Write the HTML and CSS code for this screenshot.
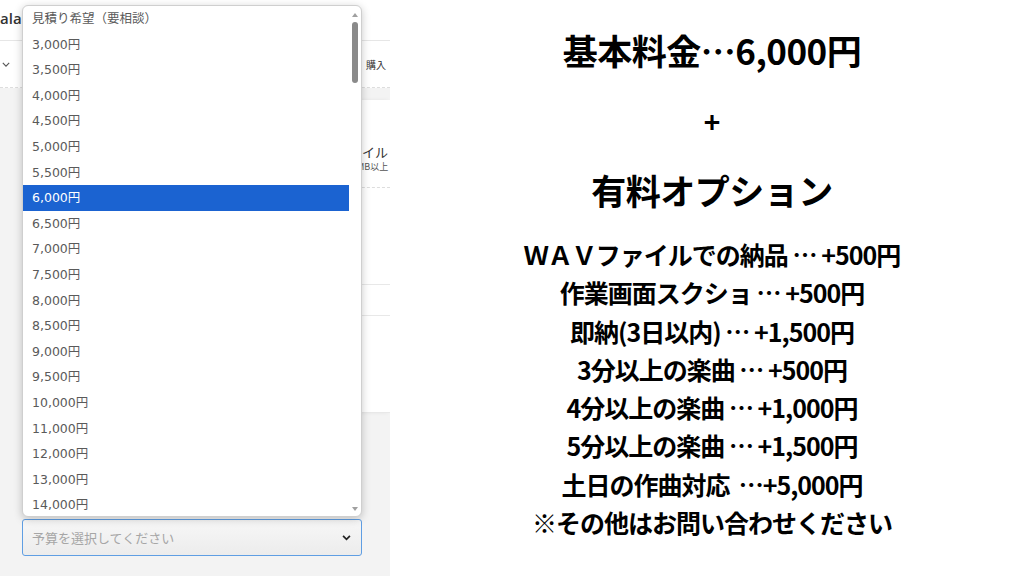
FILE: index.html
```html
<!doctype html>
<html lang="ja">
    <head>
        <meta charset="UTF-8" />
        <meta name="viewport" content="width=device-width, initial-scale=1.0" />
        <title>料金表 | 作曲依頼</title>
        <link rel="stylesheet" href="styles.css">
    </head>
    <body>
        <section class="shot">
            <header class="top-bar">
                <span class="logo">ala</span>
            </header>
            <div class="nav-bar">
                <span class="nav-chevron">
                    <svg viewBox="0 0 10 6" width="8" height="5"><path d="M1 1l4 4 4-4" fill="none" stroke="#555" stroke-width="1.4"/></svg>
                </span>
                <span class="nav-buy">購入</span>
            </div>
            <div class="card">
                <div class="card-row dashed">
                    <span class="card-title">ファイル</span>
                    <span class="card-sub">100MB以上</span>
                </div>
                <div class="card-row"></div>
                <div class="card-row short"></div>
                <div class="card-row"></div>
            </div>

            <div class="budget">
                <div class="fake-select">
                    <span class="placeholder">予算を選択してください</span>
                    <svg viewBox="0 0 10 7" width="9" height="6"><path d="M1 1l4 4 4-4" fill="none" stroke="#222" stroke-width="2"/></svg>
                </div>
            </div>

            <!-- open dropdown list -->
            <div class="popup">
                <ul class="options">
                    <li>見積り希望（要相談）</li>
                    <li>3,000円</li>
                    <li>3,500円</li>
                    <li>4,000円</li>
                    <li>4,500円</li>
                    <li>5,000円</li>
                    <li>5,500円</li>
                    <li class="selected">6,000円</li>
                    <li>6,500円</li>
                    <li>7,000円</li>
                    <li>7,500円</li>
                    <li>8,000円</li>
                    <li>8,500円</li>
                    <li>9,000円</li>
                    <li>9,500円</li>
                    <li>10,000円</li>
                    <li>11,000円</li>
                    <li>12,000円</li>
                    <li>13,000円</li>
                    <li>14,000円</li>
                </ul>
                <div class="scroll">
                    <span class="arrow up"></span>
                    <span class="thumb"></span>
                    <span class="arrow down"></span>
                </div>
            </div>
        </section>

        <section class="price">
            <h1 class="big">基本料金…6,000円</h1>
            <div class="plus">+</div>
            <h2 class="big">有料オプション</h2>
            <ul class="opts">
                <li>ＷＡＶファイルでの納品 … +500円</li>
                <li>作業画面スクショ … +500円</li>
                <li>即納(3日以内) … +1,500円</li>
                <li>3分以上の楽曲 … +500円</li>
                <li>4分以上の楽曲 … +1,000円</li>
                <li>5分以上の楽曲 … +1,500円</li>
                <li>土日の作曲対応 &nbsp;…+5,000円</li>
                <li>※その他はお問い合わせください</li>
            </ul>
        </section>
    </body>
</html>
```

FILE: styles.css
```css
body,
html {
    margin: 0;
    padding: 0;
}
body {
    display: flex;
    width: 1024px;
    height: 576px;
    overflow: hidden;
    font-family: "Noto Sans CJK JP", "Noto Sans", sans-serif;
    background: #fff;
}

/* left: screenshot of the order form */
.shot {
    position: relative;
    width: 390px;
    height: 576px;
    flex: none;
    background: #f3f3f3;
    overflow: hidden;
    display: flex;
    flex-direction: column;
}
.top-bar {
    height: 40px;
    background: #fff;
    border-bottom: 1px solid #e6e6e6;
    display: flex;
    align-items: center;
}
.logo {
    font-family: "Open Sans", sans-serif;
    font-weight: 600;
    font-size: 15px;
    color: #333;
    margin-left: 0;
    margin-top: -4px;
}
.nav-bar {
    height: 46px;
    background: #fff;
    border-bottom: 1px dashed #ddd;
    display: flex;
    align-items: center;
    justify-content: space-between;
    padding: 0 4px 0 2px;
    font-size: 10px;
    color: #333;
}
.nav-chevron {
    display: flex;
}
.card {
    margin: 12px 0 0 auto;
    width: 360px;
    background: #fff;
    box-shadow: -2px 0 4px rgba(0, 0, 0, 0.06);
}
.card-row {
    height: 96px;
    border-bottom: 1px solid #e8e8e8;
    position: relative;
}
.card-row.short {
    height: 30px;
}
.card-row.dashed {
    height: 88px;
    border-bottom: 1px dashed #ddd;
    display: flex;
    flex-direction: column;
    padding-left: 306px;
    padding-top: 44px;
    box-sizing: border-box;
}
.card-title {
    font-size: 13px;
    color: #333;
    line-height: 16px;
}
.card-sub {
    font-size: 9px;
    color: #555;
    margin-left: 6px;
}

.budget {
    margin-top: auto;
    padding: 0 0 20px 22px;
}
.fake-select {
    width: 340px;
    height: 37px;
    box-sizing: border-box;
    border: 1px solid #5f9ee3;
    border-radius: 3px;
    background: linear-gradient(#f7f7f7, #ececec);
    display: flex;
    align-items: center;
    justify-content: space-between;
    padding: 0 10px 0 9px;
}
.placeholder {
    font-size: 13px;
    color: #a6a6a6;
}

.popup {
    position: absolute;
    left: 22px;
    top: 5px;
    width: 340px;
    height: 512px;
    box-sizing: border-box;
    background: #fff;
    border: 1px solid #cfcfcf;
    border-radius: 6px;
    box-shadow: 0 2px 8px rgba(0, 0, 0, 0.22);
    overflow: hidden;
    display: flex;
}
.options {
    list-style: none;
    margin: 0;
    padding: 0;
    flex: 1;
}
.options li {
    height: 25.6px;
    line-height: 25.6px;
    padding-left: 9px;
    font-family: "DejaVu Sans", "Noto Sans CJK JP", sans-serif;
    font-size: 12.5px;
    color: #5a5a5a;
}
.options li.selected {
    background: #1b63d1;
    color: #fff;
}
.scroll {
    width: 12px;
    flex: none;
    position: relative;
}
.thumb {
    position: absolute;
    left: 3px;
    top: 16px;
    width: 6px;
    height: 61px;
    border-radius: 3px;
    background: #8a8a8a;
}
.arrow {
    position: absolute;
    left: 3px;
    width: 0;
    height: 0;
    border-left: 3px solid transparent;
    border-right: 3px solid transparent;
}
.arrow.up {
    top: 7px;
    border-bottom: 4px solid #a0a0a0;
}
.arrow.down {
    bottom: 5px;
    border-top: 4px solid #a0a0a0;
}

/* right: price list */
.price {
    flex: 1;
    display: flex;
    flex-direction: column;
    align-items: center;
    padding: 25px 0 0 10px;
    color: #000;
}
.big {
    margin: 0;
    font-size: 35px;
    line-height: 50px;
    font-weight: 700;
    letter-spacing: -0.5px;
}
.plus {
    margin-top: 26px;
    font-size: 28px;
    font-weight: 700;
    line-height: 40px;
}
.price h2 {
    margin-top: 24px;
}
.opts {
    list-style: none;
    margin: 20px 0 0;
    padding: 0;
    text-align: center;
}
.opts li {
    font-size: 25px;
    line-height: 38.3px;
    font-weight: 700;
    letter-spacing: -1px;
}
```
